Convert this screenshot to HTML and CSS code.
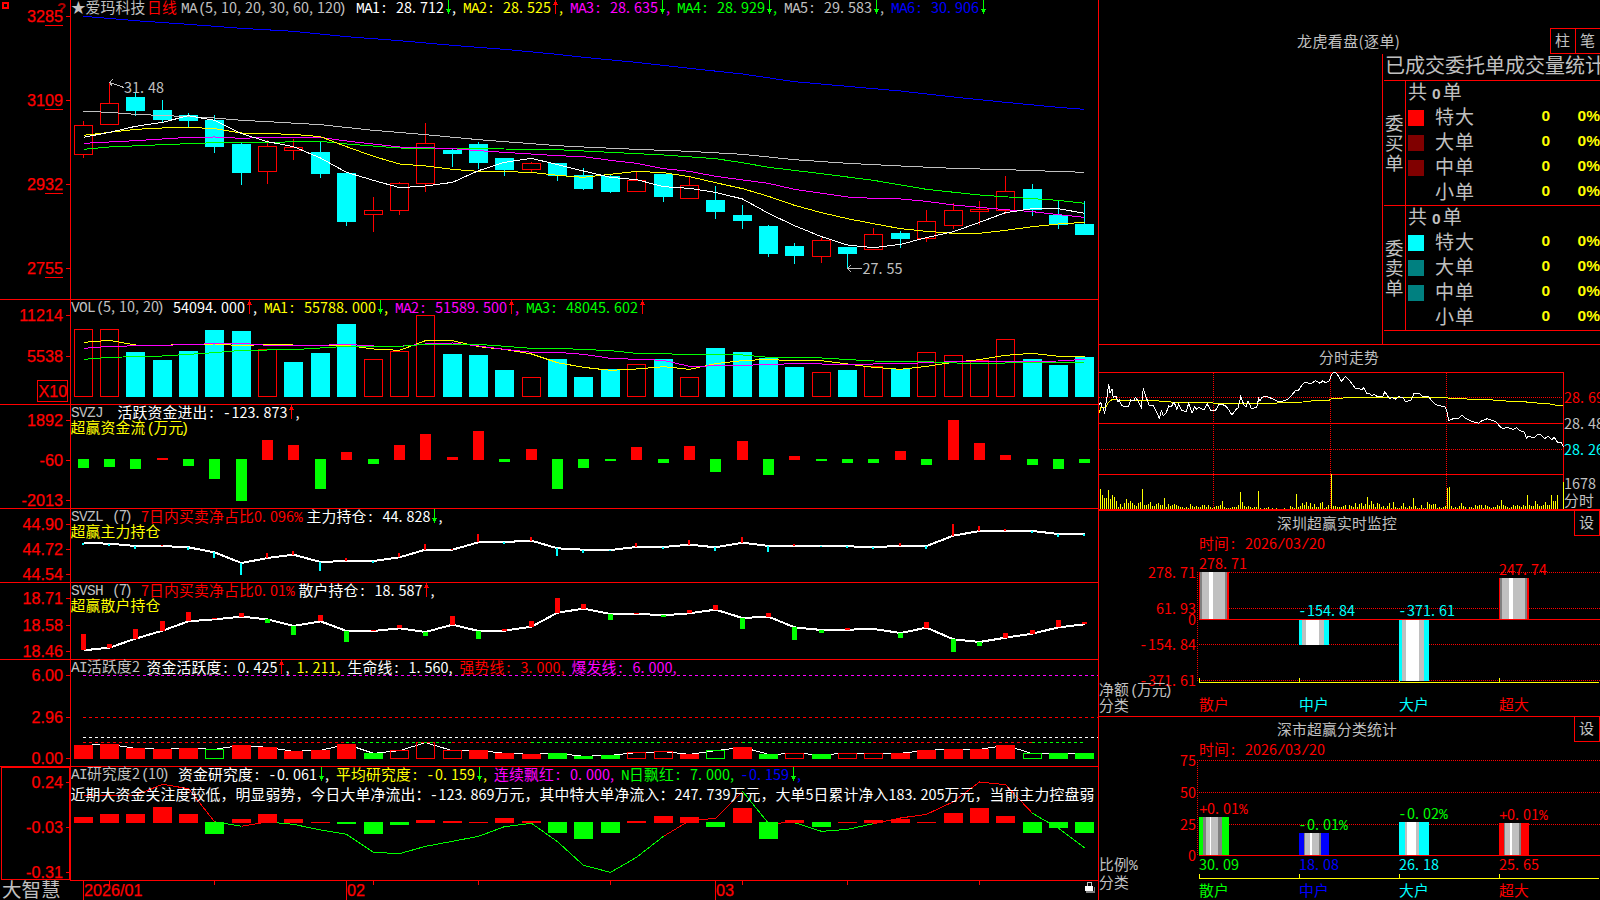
FILE: index.html
```html
<!DOCTYPE html>
<html lang="zh-CN">

<head>
  <meta charset="UTF-8">
  <meta name="viewport" content="width=device-width, initial-scale=1.0">
  <title>爱玛科技 日线</title>
  <link rel="stylesheet" href="styles.css">
</head>

<body>
  <main class="charts">
    <svg id="kline" class="panel" viewBox="0 0 1098 299" height="299"></svg>
    <svg id="vol" class="panel" viewBox="0 300 1098 104" height="104"></svg>
    <svg id="svzj" class="panel" viewBox="0 405 1098 103" height="103"></svg>
    <svg id="svzl" class="panel" viewBox="0 509 1098 73" height="73"></svg>
    <svg id="svsh" class="panel" viewBox="0 583 1098 76" height="76"></svg>
    <svg id="active" class="panel" viewBox="0 660 1098 106" height="106"></svg>
    <svg id="study" class="panel last" viewBox="0 767 1098 133" height="133"></svg>
  </main>

  <aside class="side">
    <section class="orders">
      <div class="orders-head">
        <h2>龙虎看盘(逐单)</h2>
        <button class="btn">柱</button>
        <button class="btn">笔</button>
      </div>
      <div class="stat">
        <h3>已成交委托单成交量统计</h3>
        <div class="block">
          <div class="name">委买单</div>
          <div class="rows">
            <div class="total">共<b>0</b>单</div>
            <div class="row"><i class="sw buy1"></i><span>特大</span><b>0</b><b>0%</b></div>
            <div class="row"><i class="sw buy2"></i><span>大单</span><b>0</b><b>0%</b></div>
            <div class="row"><i class="sw buy2"></i><span>中单</span><b>0</b><b>0%</b></div>
            <div class="row"><i class="sw"></i><span>小单</span><b>0</b><b>0%</b></div>
          </div>
        </div>
        <div class="block">
          <div class="name">委卖单</div>
          <div class="rows">
            <div class="total">共<b>0</b>单</div>
            <div class="row"><i class="sw sell1"></i><span>特大</span><b>0</b><b>0%</b></div>
            <div class="row"><i class="sw sell2"></i><span>大单</span><b>0</b><b>0%</b></div>
            <div class="row"><i class="sw sell2"></i><span>中单</span><b>0</b><b>0%</b></div>
            <div class="row"><i class="sw"></i><span>小单</span><b>0</b><b>0%</b></div>
          </div>
        </div>
      </div>
    </section>

    <svg id="trend" class="trend" viewBox="1099 345 501 164" height="164"></svg>

    <section class="monitor">
      <svg id="money" viewBox="1099 511 501 205" height="205"></svg>
      <button class="btn set">设</button>
    </section>

    <section class="monitor">
      <svg id="ratio" viewBox="1099 717 501 183" height="183"></svg>
      <button class="btn set">设</button>
    </section>
  </aside>

  <script src="script.js"></script>
</body>

</html>
```

FILE: styles.css
```css
* {
  box-sizing: border-box;
}

body {
  margin: 0;
  width: 1600px;
  height: 900px;
  overflow: hidden;
  display: flex;
  background: #000;
  color: #c0c0c0;
  font-family: "Noto Sans CJK SC", sans-serif;
}

svg {
  display: block;
  width: 100%;
  overflow: visible;
  shape-rendering: crispEdges;
}

/* 左侧图表 */
.charts {
  width: 1099px;
  border-right: 1px solid #f00;
}

.panel {
  box-sizing: content-box;
  border-bottom: 1px solid #f00;
}

.panel.last {
  border-bottom: none;
}

text {
  font-family: "Noto Sans CJK SC", sans-serif;
  font-size: 14.8px;
  white-space: pre;
}

.num {
  font-size: 14.4px;
}

.mono {
  font-family: "Liberation Mono", monospace;
  font-size: 14.5px;
}

.axis {
  font-family: "Liberation Sans", sans-serif;
  font-size: 16.2px;
  fill: #f00;
  stroke: #f00;
  stroke-width: .25px;
}

.brand {
  font-size: 19.5px;
  fill: #c0c0c0;
}

.help {
  font-family: "Liberation Sans", sans-serif;
  font-size: 15px;
  font-weight: bold;
  fill: #b00000;
}

/* 右侧 */
.side {
  width: 501px;
}

.orders {
  height: 345px;
  border-bottom: 1px solid #f00;
}

.orders-head {
  display: flex;
  height: 54px;
  padding-top: 28px;
}

.orders-head h2 {
  margin: 0 149px 0 198px;
  width: 104px;
  font-size: 15px;
  font-weight: normal;
  line-height: 25px;
  letter-spacing: .4px;
  white-space: nowrap;
}

.btn {
  flex: none;
  width: 25px;
  height: 26px;
  padding: 0 1px 2px 0;
  border: 1px solid #f00;
  border-right: none;
  background: #000;
  color: #c0c0c0;
  font: 15px "Noto Sans CJK SC", sans-serif;
  line-height: 20px;
}

.stat {
  margin-left: 283px;
  height: 290px;
  border-left: 1px solid #f00;
  padding-left: 1px;
  overflow: hidden;
}

.stat h3 {
  margin: 0;
  height: 26px;
  padding-left: 1px;
  font-size: 20px;
  font-weight: normal;
  line-height: 22px;
  white-space: nowrap;
}

.block {
  display: flex;
  height: 125px;
  border-top: 1px solid #f00;
}

.block:last-child {
  height: 126px;
  border-bottom: 1px solid #f00;
}

.name {
  width: 22px;
  padding: 31px 1px 0;
  border-right: 1px solid #f00;
  font-size: 18.5px;
  line-height: 20px;
  word-break: break-all;
}

.rows {
  flex: 1;
  font-size: 19px;
}

.total {
  height: 24px;
  padding-left: 2px;
  line-height: 20px;
}

.rows b {
  font-family: "Liberation Sans", sans-serif;
  font-size: 15.5px;
  line-height: 22px;
}

.total b {
  margin: 0 2px 0 5px;
}

.row {
  display: grid;
  grid-template-columns: 27px 60px 55px 50px;
  align-items: center;
  height: 25px;
  padding-left: 2px;
}

.row span {
  height: 25px;
  letter-spacing: 1px;
  line-height: 21px;
}

.row b {
  height: 25px;
  text-align: right;
  color: #ff0;
}

.sw {
  width: 16px;
  height: 16px;
}

.buy1 {
  background: #f00;
}

.buy2 {
  background: #800000;
}

.sell1 {
  background: #0ff;
}

.sell2 {
  background: #008080;
}

.monitor {
  position: relative;
  border-top: 1px solid #f00;
}

.trend + .monitor {
  border-top-width: 2px;
}

.set {
  position: absolute;
  top: -1px;
  right: 0;
  width: 26px;
  border-right: 1px solid #f00;
}
```

FILE: script.js
```js
const RED = '#f00', GREEN = '#0f0', CYAN = '#0ff', YELLOW = '#ff0';
const PINK = '#f0f', BLUE = '#00f', GRAY = '#c0c0c0', WHITE = '#fff';

const $ = (id) => document.getElementById(id);
const add = (id, html) => $(id).insertAdjacentHTML('beforeend', html);

// 第 i 根K线的中心
const cx = (i) => Math.floor(83 + i * 26.365);

const rect = (x, y, w, h, fill) => `<rect x="${x}" y="${y}" width="${w}" height="${h}" fill="${fill}"/>`;
const box = (x, y, w, h, stroke) =>
  `<rect x="${x + .5}" y="${y + .5}" width="${w - 1}" height="${h - 1}" fill="none" stroke="${stroke}"/>`;
const hline = (x1, x2, y, color, dash = '') =>
  `<line x1="${x1}" x2="${x2}" y1="${y + .5}" y2="${y + .5}" stroke="${color}" stroke-dasharray="${dash}"/>`;
const vline = (x, y1, y2, color, dash = '') =>
  `<line x1="${x + .5}" x2="${x + .5}" y1="${y1}" y2="${y2}" stroke="${color}" stroke-dasharray="${dash}"/>`;
const poly = (pts, color, w = 1) => `<polyline points="${pts}" fill="none" stroke="${color}" stroke-width="${w}"/>`;

const charWidth = (c) => (c.charCodeAt(0) < 256 ? 8 : 15);
const textWidth = (s) => [...s].reduce((n, c) => n + charWidth(c), 0);

// 标点在半角格子里的偏移
const shift = { ':': 2, ')': -3, '(': 1, '-': -1 };

// 等宽文字: 半角 8px, 全角 15px
function text(x, y, s, color) {
  let html = '';
  const runs = s.match(/[0-9.,:]+|[!-~]+?(?=[0-9.,: ]|[^!-~]|$)| +|[^ -~]+/g);
  for (const run of runs) {
    const xs = [];
    for (const c of run) {
      xs.push(x + (shift[c] || 0));
      x += charWidth(c);
    }
    const cls = /^[0-9.,:]/.test(run) ? 'num' : /^[!-~]/.test(run) ? 'mono' : 'cjk';
    html += `<tspan class="${cls}" x="${xs.join(' ')}">${run}</tspan>`;
  }
  return `<text y="${y}" fill="${color}">${html}</text>`;
}

function arrow(x, y, up) {
  return up
    ? vline(x, y - 13, y + 1, RED) + rect(x - 1, y - 11, 3, 2, RED) + rect(x - 2, y - 9, 5, 1, RED)
    : vline(x, y - 13, y + 1, GREEN) + rect(x - 2, y - 4, 5, 1, GREEN) + rect(x - 1, y - 3, 3, 2, GREEN);
}

// items: [文字, 颜色, 箭头 1上 -1下 0无, 是否不加逗号]
function legend(x, y, items) {
  let html = '';
  for (const [s, color, dir, noComma] of items) {
    html += text(x, y, s, color);
    x += textWidth(s);
    if (dir) {
      html += arrow(Math.floor(x + 4), y, dir > 0);
      x += 8;
    }
    if (!noComma) html += text(x, y, ',', color);
    x += 11;
  }
  return html;
}

function axis(id, y1, y2, labels) {
  let html = vline(70, y1, y2, RED);
  for (const [s, y] of labels) {
    html += hline(66, 70, y, RED) + `<text class="axis" x="63" y="${y + 6}" text-anchor="end">${s}</text>`;
  }
  add(id, html);
}

// 折线数据的纵坐标单位是 1/3 像素
const line = (base, pts, color, w) => poly(pts.map(([i, v]) => [cx(i) + .5, base + v / 3]).join(' '), color, w);
const full = (arr) => arr.map((v, i) => [i, v]);

/* ---------- K线 ---------- */
const candles = [
  [125, 155, 121, 158], [103, 125, 83, 125], [97, 111, 93, 116], [110, 120, 100, 122], [115, 121, 113, 127],
  [120, 147, 115, 153], [144, 173, 143, 185], [146, 172, 140, 184], [147, 151, 139, 160], [152, 174, 142, 178],
  [173, 222, 173, 226], [210, 215, 197, 232], [183, 211, 182, 215], [143, 184, 123, 192], [150, 154, 148, 167],
  [144, 163, 142, 169], [158, 170, 158, 176], [163, 170, 162, 172], [163, 176, 163, 181], [175, 189, 168, 190],
  [176, 192, 175, 193], [180, 192, 172, 192], [174, 197, 174, 202], [185, 199, 177, 199], [200, 212, 186, 219],
  [215, 221, 205, 229], [226, 254, 225, 257], [246, 256, 243, 264], [240, 257, 238, 263], [247, 254, 247, 268],
  [234, 250, 228, 250], [233, 239, 231, 248], [221, 239, 210, 242], [210, 226, 203, 229], [209, 212, 201, 225],
  [191, 211, 176, 214], [189, 210, 184, 216], [215, 225, 201, 229], [224, 235, 201, 235]
];
const rise = 'rrcccccrrccrrrcccrcccrcrccccrcrcrrrrccc';

let html = '';
candles.forEach(([top, bottom, high, low], i) => {
  const x = cx(i);
  if (rise[i] === 'r') {
    html += vline(x, high, top, RED) + vline(x, bottom, low, RED) + box(x - 9, top, 19, bottom - top, RED);
  } else {
    html += vline(x, high, low, CYAN) + rect(x - 9, top, 19, bottom - top, CYAN);
  }
});
html += line(0, [[0, 49], [2, 62], [4, 73], [6, 85], [8, 94], [10, 110], [12, 122], [14, 136], [16, 148], [18, 163], [19, 172],
  [21, 187], [23, 205], [25, 222], [27, 245], [29, 259], [31, 273], [33, 291], [35, 307], [37, 322], [38, 328]], BLUE);
html += line(0, [[0, 334], [1, 337], [2, 343], [4, 350], [5, 354], [6, 361], [7, 365], [9, 374], [11, 391], [13, 404], [15, 419],
  [17, 431], [18, 437], [19, 441], [21, 448], [23, 454], [25, 463], [27, 479], [29, 490], [31, 498], [33, 505], [35, 509], [38, 517]], GRAY);
html += line(0, [[0, 448], [1, 441], [3, 434], [5, 428], [7, 427], [9, 424], [10, 432], [12, 444], [14, 446], [16, 447], [18, 449],
  [20, 457], [22, 465], [24, 476], [25, 488], [26, 502], [28, 521], [30, 541], [32, 568], [34, 585], [36, 596], [37, 601], [38, 610]], GREEN);
html += line(0, [[0, 430], [2, 422], [4, 412], [5, 411], [6, 415], [7, 412], [9, 412], [10, 423], [12, 441], [13, 443], [14, 446],
  [15, 452], [16, 457], [18, 467], [19, 470], [20, 481], [21, 490], [22, 506], [23, 514], [24, 529], [26, 550], [27, 568], [29, 591],
  [30, 595], [31, 597], [32, 604], [33, 615], [35, 629], [36, 635], [37, 644], [38, 652]], PINK);
html += line(0, full([406, 397, 388, 384, 382, 386, 399, 401, 403, 410, 440, 469, 492, 498, 508, 514, 515, 517, 526, 532, 523, 514,
  518, 530, 548, 566, 589, 616, 638, 656, 671, 686, 694, 700, 700, 691, 680, 672, 667]), YELLOW);
html += line(0, full([412, 397, 379, 367, 347, 361, 401, 425, 440, 474, 517, 541, 563, 558, 547, 512, 487, 475, 494, 513, 532, 539,
  560, 565, 577, 597, 640, 677, 710, 735, 743, 733, 713, 695, 667, 638, 626, 626, 640]), WHITE);

html += poly('124,87.5 109.5,82.5', GRAY) + poly('113,79 109.5,82.5 112,86', GRAY) + text(124, 93, '31.48', GRAY);
html += poly('862,268.5 847.5,268.5', GRAY) + poly('851,265 847.5,268.5 851,272', GRAY) + text(862.5, 274, '27.55', GRAY);
html += '<rect x="3" y="3" width="5" height="5" fill="none" stroke="#f00" stroke-width="2"/><text class="help" x="57" y="13">?</text>';
html += text(71, 13, '★', GRAY) + text(85.5, 13, '爱玛科技', GRAY) + text(147, 13, '日线', RED) + text(181, 13, 'MA(5,10,20,30,60,120)', GRAY);
html += legend(356, 13, [['MA1: 28.712', WHITE, -1], ['MA2: 28.525', YELLOW, 1], ['MA3: 28.635', PINK, -1],
  ['MA4: 28.929', GREEN, -1], ['MA5: 29.583', GRAY, -1], ['MA6: 30.906', BLUE, -1, true]]);
add('kline', html);
axis('kline', 0, 299, [['3285', 16], ['3109', 100], ['2932', 184], ['2755', 268]]);
add('kline', [25, 109, 193, 277].map((y) => hline(45, 63, y, RED)).join(''));

/* ---------- 成交量 ---------- */
const vols = [329, 329, 352, 360, 351, 330, 331, 349, 362, 353, 324, 359, 351, 315, 354, 355, 370, 377, 359, 377, 369, 364, 359,
  377, 348, 352, 358, 367, 372, 370, 366, 369, 352, 355, 360, 339, 359, 365, 357];
html = vols.map((y, i) => (rise[i] === 'r' && i !== 8 ? box : rect)(cx(i) - 9, y, 19, 397 - y, rise[i] === 'r' && i !== 8 ? RED : CYAN)).join('');
html += line(290, full([157, 151, 165, 166, 163, 162, 167, 163, 165, 167, 166, 177, 181, 152, 152, 170, 178, 192, 218, 232, 241, 237,
  230, 238, 221, 212, 208, 213, 212, 222, 232, 238, 229, 217, 209, 196, 190, 199, 199]), YELLOW);
html += line(290, [[0, 175], [1, 169], [3, 166], [5, 161], [6, 160], [7, 166], [9, 166], [10, 163], [11, 168], [12, 169], [13, 162],
  [14, 159], [15, 168], [16, 178], [17, 187], [18, 187], [19, 193], [20, 205], [22, 211], [23, 229], [25, 226], [27, 221], [29, 223],
  [31, 221], [33, 215], [35, 214], [37, 213], [38, 208]], PINK);
html += line(290, [[0, 208], [1, 202], [3, 198], [5, 188], [6, 181], [8, 179], [10, 169], [12, 169], [13, 163], [15, 163], [17, 175],
  [18, 175], [20, 182], [21, 190], [23, 193], [25, 195], [26, 202], [28, 204], [30, 213], [32, 215], [34, 222], [35, 219], [38, 217]], GREEN);
html += text(71, 312, 'VOL(5,10,20)', GRAY) + legend(173, 313, [['54094.000', WHITE, 1], ['MA1: 55788.000', YELLOW, -1],
  ['MA2: 51589.500', PINK, 1], ['MA3: 48045.602', GREEN, 1, true]]);
html += box(37, 380, 31, 22, RED) + '<text class="axis" x="38.5" y="397">X10</text>';
add('vol', html);
axis('vol', 300, 404, [['11214', 315], ['5538', 356]]);

/* ---------- 资金流 ---------- */
const flow = [534, 531, 537, 504, 528, 567, 633, 450, 465, 597, 486, 522, 465, 432, 501, 423, 516, 477, 597, 534, 513, 471, 519, 468,
  546, 453, 555, 498, 513, 519, 519, 483, 525, 390, 459, 495, 525, 537, 519];
html = flow.map((v, i) => {
  const y = 290 + v / 3;
  return v < 508 ? rect(cx(i) - 5, y, 11, 460 - y, RED) : rect(cx(i) - 5, 459, 11, y - 459, GREEN);
}).join('');
html += text(71, 417, 'SVZJ', GRAY) + legend(117.5, 418, [['活跃资金进出: -123.873', WHITE, 1]]);
html += text(70.5, 432.5, '超赢资金流(万元)', YELLOW);
add('svzj', html);
axis('svzj', 405, 508, [['1892', 420], ['-60', 460], ['-2013', 500]]);

/* ---------- 主力 / 散户持仓 ---------- */
function hold(base, values, ends, w, down) {
  let s = line(base, full(values), WHITE, 2);
  ends.forEach((e, i) => {
    const v = values[i];
    if (e === v) return;
    const top = Math.round(base + Math.min(e, v) / 3);
    const h = Math.max(1, Math.round(base + Math.max(e, v) / 3) - top);
    s += rect(cx(i) - (w >> 1), top, w, h, e < v ? RED : down);
  });
  return s;
}

html = hold(290,
  [759, 761, 768, 768, 772, 787, 819, 804, 794, 816, 813, 813, 802, 779, 779, 757, 756, 752, 775, 779, 780, 771, 771, 764, 772, 758,
    768, 768, 768, 769, 771, 768, 768, 737, 723, 722, 723, 732, 732],
  [765, 768, 777, 764, 780, 804, 855, 789, 783, 843, 804, 819, 789, 762, 776, 732, 762, 741, 798, 789, 783, 759, 777, 750, 783, 741,
    786, 762, 771, 774, 777, 759, 777, 702, 708, 717, 729, 741, 738], 2, CYAN);
html += text(71, 521, 'SVZL (7)', GRAY) + text(141, 522, '7日内买卖净占比0.096%', RED) + legend(306.5, 522, [['主力持仓: 44.828', WHITE, -1]]);
html += text(70.5, 537, '超赢主力持仓', YELLOW);
add('svzl', html);
axis('svzl', 509, 582, [['44.90', 524], ['44.72', 549], ['44.54', 574]]);

html = hold(580,
  [211, 203, 176, 152, 124, 118, 110, 118, 138, 124, 153, 153, 145, 156, 134, 153, 152, 140, 98, 86, 102, 101, 106, 100, 89, 114, 110,
    142, 150, 149, 147, 159, 143, 178, 186, 173, 161, 142, 133],
  [162, 192, 147, 123, 96, 114, 99, 129, 165, 105, 186, 150, 135, 168, 108, 177, 147, 123, 54, 72, 120, 98, 111, 90, 75, 147, 99, 180,
    159, 144, 147, 174, 126, 216, 198, 159, 150, 120, 126], 5, GREEN);
html += text(71, 595, 'SVSH (7)', GRAY) + text(141, 596, '7日内买卖净占比0.01%', RED) + legend(298.5, 596, [['散户持仓: 18.587', WHITE, 1]]);
html += text(70.5, 611, '超赢散户持仓', YELLOW);
add('svsh', html);
axis('svsh', 583, 659, [['18.71', 598], ['18.58', 625], ['18.46', 651]]);

/* ---------- AI活跃度 ---------- */
const act = [495, 492, 504, 507, 504, 507, 495, 501, 513, 510, 492, 519, 511, 487, 511, 510, 519, 522, 519, 528, 525, 517, 514, 522, 511,
  501, 522, 520, 522, 520, 520, 519, 510, 507, 507, 495, 520, 519, 519];
// R/G 实心, r/g 空心
const actKind = 'RRRRRgRRRRRGrrrRRRGGGrrRgRGrGrrRRRRRgGG';
html = line(580, full(act.map((v) => v + 1)), WHITE);
act.forEach((v, i) => {
  const k = actKind[i];
  const y = Math.floor(580 + v / 3);
  const draw = k < 'a' ? rect : box;
  html += draw(cx(i) - 9, y, 19, 759 - y, k.toLowerCase() === 'r' ? RED : GREEN);
});
html += hline(83, 1098, 675, PINK, '3 3') + hline(83, 1098, 717, RED, '3 3') + hline(83, 1098, 737, WHITE, '3 3');
[[0, 10, RED], [10, 14, GREEN], [14, 17, RED], [17, 22, GREEN], [22, 25, RED], [25, 30, GREEN], [30, 36, RED], [36, 38, GREEN]]
  .forEach(([a, b, c]) => { html += hline(cx(a), cx(b), 742, c, '3 3'); });
html += text(71, 672, 'AI活跃度2', GRAY) + legend(146.5, 673, [['资金活跃度: 0.425', WHITE, 1], ['1.211', YELLOW, 0],
  ['生命线: 1.560', WHITE, 0], ['强势线: 3.000', RED, 0], ['爆发线: 6.000', PINK, 0]]);
add('active', html);
axis('active', 660, 766, [['6.00', 675], ['2.96', 717], ['0.00', 758]]);

/* ---------- AI研究度 ---------- */
const study = [646, 646, 646, 613, 626, 725, 739, 726, 733, 750, 763, 817, 821, 799, 784, 769, 740, 730, 785, 856, 877, 832, 769, 722, 715,
  634, 730, 728, 754, 748, 731, 714, 703, 665, 606, 614, 700, 745, 803];
html = '';
[[0, 5, RED], [5, 6, GREEN], [6, 7, RED], [7, 22, GREEN], [22, 25, RED], [25, 26, GREEN], [26, 27, RED], [27, 30, GREEN],
  [30, 36, RED], [36, 38, GREEN]]
  .forEach(([a, b, c]) => { html += line(580, full(study).slice(a, b + 1), c); });
[711, 702, 702, 681, 702, 762, 717, 702, 717, 726, 732, 762, 735, 720, 723, 726, 714, 723, 759, 777, 759, 723, 708, 711, 741, 684, 777,
  720, 741, 726, 720, 717, 726, 699, 684, 708, 759, 744, 759].forEach((v, i) => {
  const y = 580 + v / 3;
  html += v < 728 ? rect(cx(i) - 9, y, 19, 823 - y, RED) : rect(cx(i) - 9, 822, 19, y - 822, GREEN);
});
html += text(71, 779, 'AI研究度2(10)', GRAY) + legend(178, 780, [['资金研究度: -0.061', WHITE, -1], ['平均研究度: -0.159', YELLOW, -1],
  ['连续飘红: 0.000', PINK, 0], ['N日飘红: 7.000', GREEN, 0], ['-0.159', BLUE, -1]]);
html += text(70.5, 800, '近期大资金关注度较低，明显弱势，今日大单净流出：-123.869万元，其中特大单净流入：247.739万元，大单5日累计净入183.205万元，当前主力控盘弱', WHITE);
html += box(1, 767, 69, 113, RED) + hline(70, 1098, 880, RED);
// 时间轴
[[83, '2026/01'], [346, '02'], [715, '03']].forEach(([x, s]) => {
  html += vline(x, 880, 900, RED) + `<text class="axis" x="${x + 1}" y="896">${s}</text>`;
});
[109, 214, 373, 478, 610, 742, 847, 979].forEach((x) => { html += vline(x, 881, 885, RED); });
html += '<text class="brand" x="2" y="897">大智慧</text>';
// 锁
html += box(1087, 882, 5, 5, GRAY) + rect(1086, 891, 9, 2, '#808080') + rect(1094, 887, 1, 6, '#808080') + rect(1085, 886, 8, 5, WHITE);
add('study', html);
axis('study', 767, 880, [['0.24', 782], ['-0.03', 827], ['-0.31', 872]]);

/* ---------- 分时走势 ---------- */
const scale = (s) => s.split(' ').map((p) => {
  const [x, y] = p.split(',');
  return (1090 + x / 3).toFixed(1) + ',' + (340 + y / 3).toFixed(1);
}).join(' ');

html = text(1319, 362.5, '分时走势', GRAY);
[397, 449].forEach((y) => { html += hline(1099, 1563, y, RED, '1 1'); });
[1213, 1330, 1446].forEach((x) => { html += vline(x, 373, 509, RED, '1 1'); });
[372, 423, 474].forEach((y) => { html += hline(1099, 1564, y, RED); });
html += vline(1563, 372, 509, RED);
const ticks = [20, 14, 11, 11, 19, 10, 14, 12, 8, 2, 5, 2, 6, 10, 6, 8, 6, 4, 3, 6, 7, 20, 4, 4, 5, 7, 3, 3, 5, 6, 4, 4, 11, 2, 5, 3, 4, 5, 4, 3,
  2, 2, 1, 2, 1, 5, 3, 2, 3, 2, 2, 4, 4, 2, 4, 2, 1, 2, 3, 3, 4, 8, 2, 1, 1, 1, 2, 2, 2, 4, 17, 7, 3, 2, 3, 2, 1, 2, 2, 18,
  1, 0, 1, 1, 2, 0, 1, 0, 1, 0, 0, 0, 1, 0, 0, 3, 2, 1, 15, 2, 3, 6, 4, 7, 3, 6, 2, 5, 2, 2, 6, 7, 1, 2, 4, 35, 3, 3, 2,
  2, 2, 3, 4, 0, 4, 3, 2, 6, 2, 5, 6, 3, 5, 12, 4, 8, 5, 2, 6, 5, 2, 3, 1, 3, 6, 1, 7, 2, 1, 1, 3, 6, 2, 1, 3, 2, 11, 3, 1,
  1, 4, 1, 1, 7, 5, 4, 5, 5, 1, 2, 1, 2, 3, 21, 22, 3, 1, 2, 1, 3, 6, 3, 2, 0, 2, 2, 1, 4, 3, 4, 4, 1, 4, 3, 2, 1, 2, 2, 4,
  3, 9, 4, 3, 2, 1, 2, 4, 3, 4, 3, 2, 4, 3, 14, 4, 3, 3, 8, 5, 3, 3, 4, 7, 4, 4, 14, 8, 8, 14];
ticks.forEach((h, k) => { html += rect(1100 + k * 2 + (k >= 115 ? 1 : 0), 509 - h, 1, h, YELLOW); });
html += rect(1563, 482, 1, 27, YELLOW);
html += poly(scale('28,218 34,200 46,204 56,186 68,178 100,182 160,180 178,180 216,184 270,188 360,188 376,190 550,190 585,187 640,186 680,181 718,181 724,176 760,174 800,172 1070,172 1080,176 1180,178 1260,184 1300,185 1350,190 1380,192 1400,196 1420,196'), YELLOW);
html += poly(scale('28,195 32,187 36,200 40,205 44,222 48,190 52,165 56,132 60,160 66,148 70,172 78,168 84,185 88,180 94,195 104,200 116,198 122,180 132,182 136,172 144,182 154,202 160,145 168,172 172,180 178,198 190,196 198,212 208,235 214,212 220,226 228,220 236,198 244,200 252,185 260,208 266,192 274,210 288,216 296,190 306,220 314,200 320,208 326,202 342,210 352,192 362,212 376,212 388,192 404,196 414,206 426,225 438,208 444,205 452,170 462,195 468,200 474,182 484,205 500,203 506,175 510,184 516,172 528,169 544,175 568,186 584,182 594,178 606,165 616,152 626,150 640,130 650,127 662,132 676,122 690,130 698,122 706,128 718,122 724,105 732,97 740,100 754,124 766,110 776,118 796,145 816,148 822,143 830,160 840,162 846,168 852,162 862,170 878,170 884,155 900,178 906,172 916,178 926,170 940,174 946,185 964,180 972,160 990,162 996,168 1014,168 1030,188 1042,196 1064,200 1070,212 1076,242 1090,236 1104,236 1116,226 1126,234 1140,242 1166,250 1176,242 1192,236 1216,244 1232,262 1240,266 1250,262 1270,268 1280,263 1290,272 1302,276 1310,295 1314,288 1332,294 1342,284 1352,284 1364,296 1374,288 1386,300 1392,292 1404,308 1414,308 1420,320'), WHITE);
html += text(1564, 403, '28.69', RED) + text(1564, 429, '28.48', GRAY) + text(1564, 455, '28.26', CYAN);
html += text(1564, 489, '1678', GRAY) + text(1564, 506, '分时', GRAY);
add('trend', html);

/* ---------- 超赢监控 ---------- */
const D = '#808080';
// 柱子由竖条拼成: [宽, 颜色]
function pillar(x, top, bottom, parts) {
  let s = '';
  for (const [w, c] of parts) {
    s += rect(x, top, w, bottom - top, c);
    x += w;
  }
  return s;
}
const right = (y, s) => text(1196 - textWidth(s), y, s, RED);
const baseLine = (y) => hline(1199, 1599, y, YELLOW) + [1199, 1299, 1399, 1499].map((x) => vline(x, y - 4, y, YELLOW)).join('');

html = text(1277, 528.5, '深圳超赢实时监控', GRAY) + text(1199, 549, '时间: 2026/03/20', RED);
[572, 608, 644, 680].forEach((y) => { html += hline(1197, 1600, y, RED, '1 1'); });
html += vline(1197, 572, 680, RED, '1 1') + hline(1199, 1600, 619, RED) + baseLine(682);
const hot = [[1, RED], [2, D], [7, GRAY], [4, WHITE], [12, GRAY], [2, D], [2, RED]];
const cold = [[3, CYAN], [4, GRAY], [13, WHITE], [5, GRAY], [5, CYAN]];
html += pillar(1199, 572, 619, hot) + pillar(1499, 578, 619, hot) + pillar(1299, 620, 645, cold) + pillar(1399, 620, 681, cold);
html += right(578, '278.71') + right(614, '61.93') + right(625, '0') + right(650, '-154.84') + right(686, '-371.61');
html += text(1199, 569, '278.71', RED) + text(1299, 616, '-154.84', CYAN) + text(1399, 616, '-371.61', CYAN) + text(1499, 575, '247.74', RED);
html += text(1099, 694.5, '净额(万元)', GRAY) + text(1099, 710.5, '分类', GRAY);
html += text(1199, 710, '散户', RED) + text(1299, 710, '中户', CYAN) + text(1399, 710, '大户', CYAN) + text(1499, 710, '超大', RED);
add('money', html);

/* ---------- 分类统计 ---------- */
html = text(1277, 734.5, '深市超赢分类统计', GRAY) + text(1199, 755, '时间: 2026/03/20', RED);
[760, 792, 824].forEach((y) => { html += hline(1197, 1600, y, RED, '1 1'); });
html += vline(1197, 760, 855, RED, '1 1') + hline(1199, 1600, 855, RED) + baseLine(878);
html += pillar(1199, 817, 855, [[4, GREEN], [3, D], [4, GRAY], [1, WHITE], [7, GRAY], [4, D], [7, GREEN]]);
html += pillar(1299, 833, 855, [[5, BLUE], [1, D], [5, GRAY], [2, WHITE], [7, GRAY], [2, D], [8, BLUE]]);
html += pillar(1399, 822, 855, [[6, CYAN], [2, GRAY], [9, WHITE], [3, GRAY], [10, CYAN]]);
html += pillar(1499, 823, 855, [[5, RED], [1, D], [5, GRAY], [2, WHITE], [7, GRAY], [2, D], [8, RED]]);
html += right(766, '75') + right(798, '50') + right(830, '25') + right(861, '0');
html += text(1199, 814, '+0.01%', RED) + text(1299, 830, '-0.01%', GREEN) + text(1399, 819, '-0.02%', GREEN) + text(1499, 820, '+0.01%', RED);
[['30.09', '散户', GREEN], ['18.08', '中户', BLUE], ['26.18', '大户', CYAN], ['25.65', '超大', RED]].forEach(([v, s, c], i) => {
  html += text(1199 + i * 100, 870, v, c) + text(1199 + i * 100, 896, s, c);
});
html += text(1099, 870, '比例%', GRAY) + text(1099, 888, '分类', GRAY);
add('ratio', html);
```
